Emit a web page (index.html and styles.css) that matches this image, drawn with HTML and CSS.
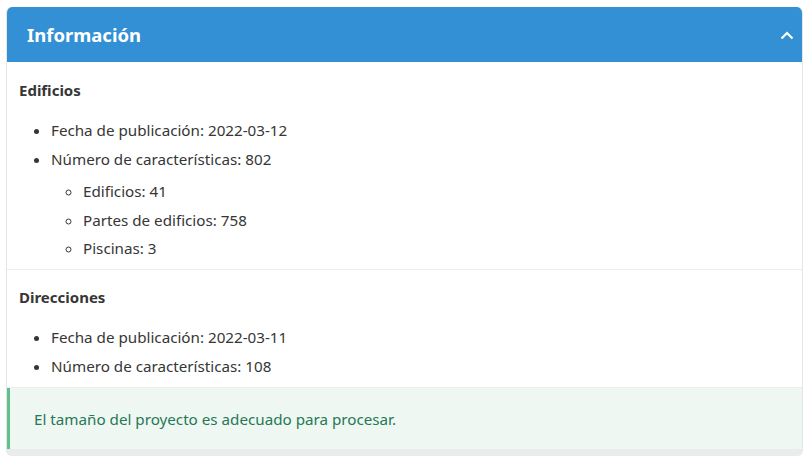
FILE: index.html
```html
<!DOCTYPE html>
<html lang="es">
<head>
<meta charset="utf-8">
<title>Información</title>
<link rel="stylesheet" href="styles.css">
</head>
<body>
<div class="card">
  <header class="card-header">
    <h2 class="card-title">Información</h2>
    <svg class="chev" width="14" height="9" viewBox="0 0 14 9"><path d="M1.5 7.5 L7 2 L12.5 7.5" fill="none" stroke="#fff" stroke-width="2.2"/></svg>
  </header>
  <section class="block">
    <h3 class="block-title">Edificios</h3>
    <ul class="list">
      <li>Fecha de publicación: 2022-03-12</li>
      <li>Número de características: 802
        <ul class="sublist">
          <li>Edificios: 41</li>
          <li>Partes de edificios: 758</li>
          <li>Piscinas: 3</li>
        </ul>
      </li>
    </ul>
  </section>
  <section class="block">
    <h3 class="block-title">Direcciones</h3>
    <ul class="list">
      <li>Fecha de publicación: 2022-03-11</li>
      <li>Número de características: 108</li>
    </ul>
  </section>
  <div class="message">El tamaño del proyecto es adecuado para procesar.</div>
</div>
</body>
</html>
```

FILE: styles.css
```css
* { box-sizing: border-box; }
body {
  margin: 0;
  background: #fff;
  font-family: "Noto Sans", "Open Sans", sans-serif;
  color: #363636;
  font-size: 15.2px;
}
.card {
  margin: 7px 6px 0 6px;
  background: #e9ecea;
  border-radius: 6px;
  border-left: 1px solid #e6e6e6;
  border-right: 1px solid #e6e6e6;
  padding-bottom: 7px;
  overflow: hidden;
}
.card-header {
  background: #3390d4;
  height: 55px;
  display: flex;
  align-items: center;
  justify-content: space-between;
  padding: 0 9px 0 21px;
  margin: 0 -1px;
}
.card-title {
  margin: 0;
  color: #fff;
  font-size: 18.5px;
  font-weight: 700;
}
.chev { display: block; margin-top: 1px; }
.block {
  background: #fff;
  padding: 17px 12px 6px 12px;
  border-bottom: 1px solid #ececec;
}
.block + .block { padding-top: 16px; }
.block-title {
  margin: 0 0 15px 0;
  font-size: 15px;
  font-weight: 700;
  line-height: 22px;
}
.list {
  margin: 0;
  padding: 0 0 0 32px;
  list-style: disc;
  line-height: 29px;
}
.sublist {
  margin: 3px 0 0 0;
  padding: 0 0 0 32px;
  list-style: circle;
  line-height: 28.5px;
}
.message {
  background: #eff7f3;
  border-left: 4px solid #61c08a;
  color: #257953;
  padding: 20px 14px 19px 24px;
  line-height: 22px;
  margin-left: -1px;
}
```
